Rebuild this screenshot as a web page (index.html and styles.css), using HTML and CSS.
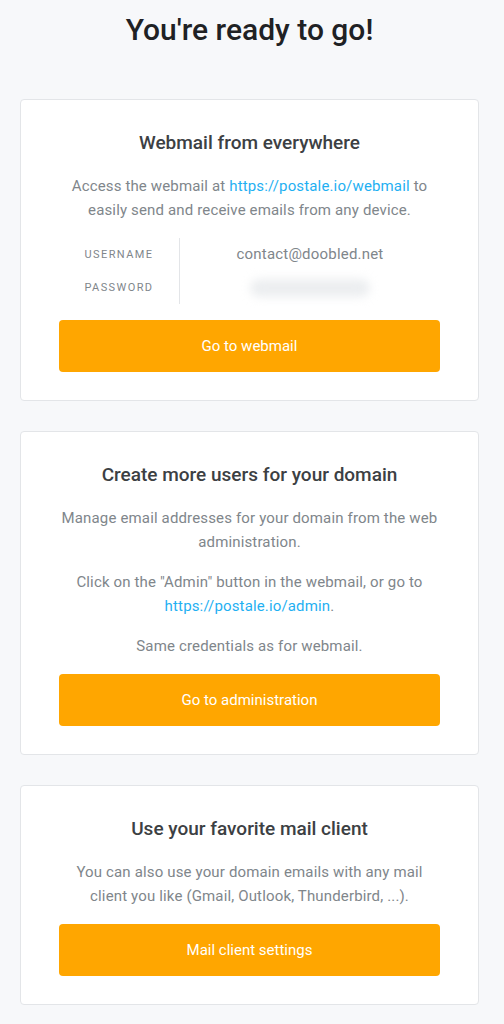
FILE: index.html
```html
<!DOCTYPE html>
<html lang="en">
<head>
    <meta charset="UTF-8">
    <title>You're ready to go!</title>
    <link rel="stylesheet" href="styles.css">
</head>
<body>
<main class="page">
    <h1 class="page-title">You're ready to go!</h1>

    <section class="card">
        <h2 class="card-title">Webmail from everywhere</h2>
        <p>Access the webmail at <a href="#">https://postale.io/webmail</a> to easily send and receive emails from any device.</p>
        <div class="creds">
            <div class="creds-labels">
                <span>Username</span>
                <span>Password</span>
            </div>
            <div class="creds-values">
                <span>contact@doobled.net</span>
                <span><i class="secret"></i></span>
            </div>
        </div>
        <a class="button" href="#">Go to webmail</a>
    </section>

    <section class="card">
        <h2 class="card-title">Create more users for your domain</h2>
        <p>Manage email addresses for your domain from the web administration.</p>
        <p>Click on the "Admin" button in the webmail, or go to <a href="#">https://postale.io/admin</a>.</p>
        <p>Same credentials as for webmail.</p>
        <a class="button" href="#">Go to administration</a>
    </section>

    <section class="card">
        <h2 class="card-title">Use your favorite mail client</h2>
        <p>You can also use your domain emails with any mail client you like (Gmail, Outlook, Thunderbird, ...).</p>
        <a class="button" href="#">Mail client settings</a>
    </section>
</main>
</body>
</html>
```

FILE: styles.css
```css
body {
    margin: 0;
    background: #f7f8fa;
    font-family: Roboto, "Liberation Sans", sans-serif;
    color: #80868b;
}
.page {
    width: 459px;
    padding: 0 0 20px 20px;
    display: flex;
    flex-direction: column;
    gap: 30px;
}
.page-title {
    margin: 12px 0 21px;
    font-size: 30px;
    line-height: 36px;
    font-weight: 500;
    color: #202124;
    text-align: center;
}
.card {
    background: #fff;
    border: 1px solid #e3e5e8;
    border-radius: 4px;
    padding: 32px 38px 28px;
    text-align: center;
    display: flex;
    flex-direction: column;
    gap: 16px;
}
.card-title {
    margin: 0 0 4px;
    font-size: 19px;
    line-height: 22px;
    font-weight: 500;
    color: #3c4043;
}
.card p {
    margin: 0;
    font-size: 15px;
    line-height: 24px;
    letter-spacing: 0.15px;
}
.card a {
    color: #1fb0f2;
    text-decoration: none;
}
.creds {
    display: flex;
}
.creds-labels,
.creds-values {
    display: flex;
    flex-direction: column;
}
.creds-labels {
    width: 120px;
    border-right: 1px solid #e3e5e8;
    font-size: 11px;
    letter-spacing: 1.4px;
    text-transform: uppercase;
}
.creds-values {
    flex: 1;
    font-size: 15px;
    letter-spacing: 0.2px;
}
.creds span {
    height: 33px;
    line-height: 33px;
}
.secret {
    display: inline-block;
    width: 120px;
    height: 18px;
    vertical-align: middle;
    background: #eceef0;
    border-radius: 9px;
    filter: blur(5px);
}
.card .button {
    display: block;
    height: 52px;
    line-height: 52px;
    background: #ffa600;
    color: #fff;
    border-radius: 4px;
    font-size: 15px;
}
```
